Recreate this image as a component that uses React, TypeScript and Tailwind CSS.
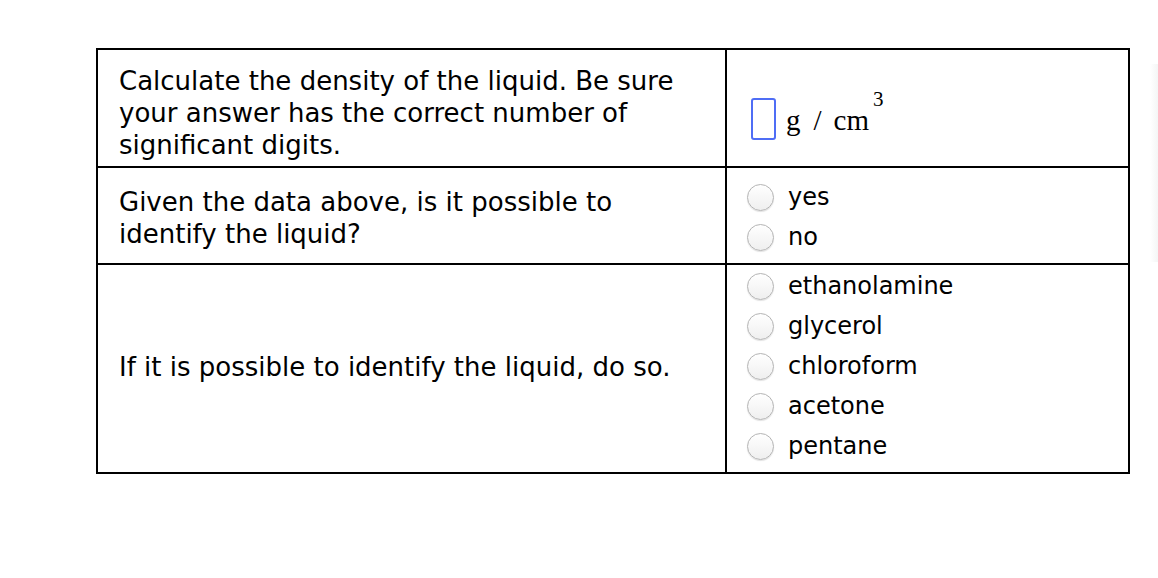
const sans = "font-['Verdana','DejaVu_Sans',sans-serif]";

function Radio({ label }: { label: string }) {
  return (
    <label className="flex h-[40px] items-center gap-[14px]">
      <span className="block h-[27px] w-[27px] shrink-0 rounded-full border border-[#b4b4b4] bg-gradient-to-b from-white to-[#efefef] shadow-[0_1px_1px_rgba(0,0,0,0.12)]" />
      <span className="text-[24px] leading-none text-black">{label}</span>
    </label>
  );
}

export default function App() {
  return (
    <div className={`relative h-[578px] w-[1158px] bg-white ${sans}`}>
      {/* faint strip at the right edge */}
      <div className="absolute right-0 top-[64px] h-[198px] w-[8px] bg-gradient-to-r from-white to-[#f4f5f5]" />

      <div className="ml-[96px] pt-[48px]">
        <div className="w-[1034px] border-2 border-black">
          {/* Row 1 */}
          <div className="flex h-[118px] border-b-2 border-black">
            <div className="w-[629px] shrink-0 border-r-2 border-black pl-[21px] pt-[15px] text-[26px] leading-[32px] text-black">
              Calculate the density of the liquid. Be sure
              <br />
              your answer has the correct number of
              <br />
              significant digits.
            </div>
            <div className="flex items-center pl-[24px] pt-[22px]">
              <span className="block h-[42px] w-[25px] rounded-[3px] border-2 border-[#4f6df5]" />
              <span className="mt-[2px] ml-[10px] font-['Liberation_Serif','Times_New_Roman',serif] text-[29px] leading-none text-black">
                g<span className="ml-[13px] mr-[12px]">/</span>cm
                <sup className="relative -top-[24px] ml-[4px] text-[21px]">3</sup>
              </span>
            </div>
          </div>

          {/* Row 2 */}
          <div className="flex h-[97px] border-b-2 border-black">
            <div className="flex w-[629px] shrink-0 items-center border-r-2 border-black pl-[21px] pt-[4px] text-[26px] leading-[32px] text-black">
              <p>
                Given the data above, is it possible to
                <br />
                identify the liquid?
              </p>
            </div>
            <div className="flex flex-col pl-[20px] pt-[9px]">
              <Radio label="yes" />
              <Radio label="no" />
            </div>
          </div>

          {/* Row 3 */}
          <div className="flex h-[207px]">
            <div className="flex w-[629px] shrink-0 items-center border-r-2 border-black pb-[4px] pl-[21px] text-[26px] leading-[32px] text-black">
              <p>If it is possible to identify the liquid, do so.</p>
            </div>
            <div className="flex flex-col pl-[20px] pt-[1px]">
              <Radio label="ethanolamine" />
              <Radio label="glycerol" />
              <Radio label="chloroform" />
              <Radio label="acetone" />
              <Radio label="pentane" />
            </div>
          </div>
        </div>
      </div>
    </div>
  );
}
